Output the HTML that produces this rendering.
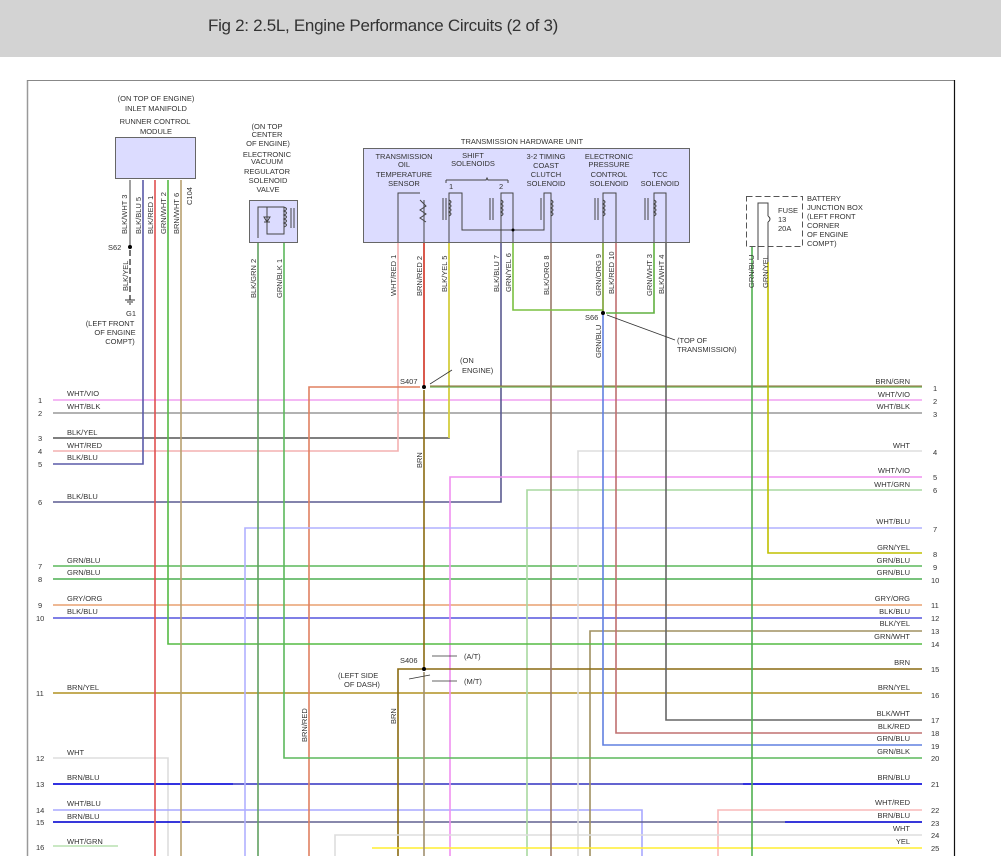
<!DOCTYPE html>
<html><head><meta charset="utf-8"><style>
html,body{margin:0;padding:0;background:#fff;width:1001px;height:856px;overflow:hidden}
.hd{position:absolute;left:0;top:0;width:1001px;height:57px;background:#d3d3d3}
.hd span{position:absolute;left:208px;top:16px;font:17px "Liberation Sans",sans-serif;color:#333;letter-spacing:-0.3px}
svg{position:absolute;left:0;top:0}
text{font-family:"Liberation Sans",sans-serif;font-size:7.5px;fill:#333}
</style></head><body>
<div class="hd"><span>Fig 2: 2.5L, Engine Performance Circuits (2 of 3)</span></div>
<svg width="1001" height="856" viewBox="0 0 1001 856">
<!-- frame -->
<line x1="27.5" y1="80" x2="27.5" y2="856" stroke="#999" stroke-width="1.5"/>
<line x1="27" y1="80.5" x2="955" y2="80.5" stroke="#888" stroke-width="1"/>
<line x1="954.5" y1="80" x2="954.5" y2="856" stroke="#111" stroke-width="1.2"/>

<g fill="none" stroke-width="1.6">
<!-- Left horizontals -->
<path d="M53 400H922" stroke="#f0a0f0"/>
<path d="M53 413H922" stroke="#999"/>
<path d="M53 438H449V242" stroke="#555"/>
<path d="M449 438V242" stroke="#e8e040"/>
<path d="M53 451H398V242" stroke="#f4b0b0"/>
<path d="M53 464H143V180" stroke="#5a5aa8"/>
<path d="M53 502H501V242" stroke="#5a5a90"/>
<path d="M53 566H922" stroke="#5cb85c"/>
<path d="M53 579H922" stroke="#4caf50"/>
<path d="M53 605H922" stroke="#e8a070"/>
<path d="M53 618H922" stroke="#5555dd"/>
<path d="M53 693H922" stroke="#b09020"/>
<path d="M53 758H168V856" stroke="#ddd"/>
<path d="M53 784H922" stroke="#3030c0"/>
<path d="M53 784H233" stroke="#1010e0"/>
<path d="M53 810H642V856" stroke="#a8a8ff"/>
<path d="M53 822H922" stroke="#606090"/>
<path d="M53 822H190" stroke="#1010e0"/>
<path d="M53 846H118" stroke="#b8e0b0"/>
<!-- Right-only horizontals -->
<path d="M430 387H922" stroke="#80c070"/>
<path d="M430 386H922" stroke="#8a6a30" stroke-width="1"/>
<path d="M309 856V387H420" stroke="#e08060"/>
<path d="M578 856V451H922" stroke="#ddd"/>
<path d="M450 856V477H922" stroke="#f090f0"/>
<path d="M527 856V490H922" stroke="#a8d8a0"/>
<path d="M245 856V528H922" stroke="#b0b0ff"/>
<path d="M768 262V553H922" stroke="#c0c000"/>
<path d="M590 856V631H922" stroke="#a09060"/>
<path d="M168 180V644H922" stroke="#55bb44"/>
<path d="M398 856V669H922" stroke="#8a6a10"/>
<path d="M666 242V720H922" stroke="#666"/>
<path d="M616 242V733H922" stroke="#c07070"/>
<path d="M603 313V745H922" stroke="#6080e0"/>
<path d="M284 242V758H922" stroke="#5cb85c"/>
<path d="M743 784H922" stroke="#1010e0"/>
<path d="M718 856V810H922" stroke="#f8b8b8"/>
<path d="M785 822H922" stroke="#1010e0"/>
<path d="M335 856V835H922" stroke="#ddd"/>
<path d="M372 848H922" stroke="#ffee30"/>
<!-- verticals -->
<path d="M130 180V247" stroke="#888"/>
<path d="M130 250V300" stroke="#555" stroke-dasharray="6,3"/>
<path d="M155 180V856" stroke="#e05050"/>
<path d="M181 180V856" stroke="#b8a070"/>
<path d="M258 242V856" stroke="#60a060"/>
<path d="M424 242V387" stroke="#d03020"/>
<path d="M424 390V669" stroke="#8a6a10"/>
<path d="M424 672V856" stroke="#a09070"/>
<path d="M551 242V856" stroke="#9a7a6a"/>
<path d="M513 242V310H603" stroke="#7ac040"/>
<path d="M654 242V313H606" stroke="#60b040"/>
<path d="M603 242V313" stroke="#7aa030"/>
<path d="M752 246V856" stroke="#50b050"/>
</g>
<!-- modules -->
<rect x="115.5" y="137.5" width="80" height="41" fill="#dcdcff" stroke="#666"/>
<rect x="249.5" y="200.5" width="48" height="42" fill="#dcdcff" stroke="#666"/>
<rect x="363.5" y="148.5" width="326" height="94" fill="#dcdcff" stroke="#666"/>
<rect x="746.5" y="196.5" width="56" height="50" fill="#fff" stroke="#555" stroke-dasharray="6,3"/>
<!-- inner trans unit -->
<g fill="none" stroke="#444" stroke-width="1">
<path d="M398 242V193H420 M424 200V242 M420 200l6 6-6 4 6 4-6 4 6 4"/>
<path d="M449 242V193H462V230H544V193H551V242 M501 242V193H513V242 M603 242V193H616V242 M654 242V193H666V242"/>
<path d="M443 198v22 M446 198v22 M490 198v22 M493 198v22 M541 198v22 M544 198v22 M595 198v22 M598 198v22 M645 198v22 M648 198v22"/>
<path d="M449 200q4 2 0 4q4 2 0 4q4 2 0 4q4 2 0 4 M501 200q4 2 0 4q4 2 0 4q4 2 0 4q4 2 0 4 M551 200q4 2 0 4q4 2 0 4q4 2 0 4q4 2 0 4 M603 200q4 2 0 4q4 2 0 4q4 2 0 4q4 2 0 4 M654 200q4 2 0 4q4 2 0 4q4 2 0 4q4 2 0 4"/>
<path d="M446 180h40l1 -2 1 2h20 M446 180v3 M508 180v3"/>
<path d="M258 238V207H284V234H267V207 M284 207q5 2 0 4q5 2 0 4q5 2 0 4q5 2 0 4q5 2 0 4 M291 208v20 M294 208v20 M264 217h6l-3 5z M264 222h6"/>
<path d="M758 260V203H768V216 M768 216q4 3 0 6 M768 222V262"/>
</g>
<circle cx="424" cy="387" r="2" fill="#000"/><circle cx="424" cy="669" r="2" fill="#000"/>
<circle cx="603" cy="313" r="2" fill="#000"/><circle cx="130" cy="247" r="2" fill="#000"/>
<circle cx="513" cy="230" r="1.5" fill="#000"/>
<path d="M125 300h10 M127 302h6 M129 304h2" stroke="#333"/>
<g stroke="#333" stroke-width="0.8" fill="none">
<path d="M430 384L452 370 M430 675L409 679 M432 656H457 M432 681H457 M607 315L675 340"/>
</g>
<!-- texts -->
<g text-anchor="middle">
<text x="156" y="101">(ON TOP OF ENGINE)</text><text x="156" y="111">INLET MANIFOLD</text>
<text x="155" y="124">RUNNER CONTROL</text><text x="156" y="134">MODULE</text>
<text x="267" y="129">(ON TOP</text><text x="267" y="137">CENTER</text><text x="268" y="146">OF ENGINE)</text>
<text x="267" y="157">ELECTRONIC</text><text x="267" y="164">VACUUM</text><text x="267" y="174">REGULATOR</text><text x="268" y="183">SOLENOID</text><text x="268" y="192">VALVE</text>
<text x="522" y="144">TRANSMISSION HARDWARE UNIT</text>
<text x="404" y="159">TRANSMISSION</text><text x="404" y="167">OIL</text><text x="404" y="177">TEMPERATURE</text><text x="404" y="186">SENSOR</text>
<text x="473" y="158">SHIFT</text><text x="473" y="166">SOLENOIDS</text>
<text x="546" y="159">3-2 TIMING</text><text x="546" y="168">COAST</text><text x="546" y="177">CLUTCH</text><text x="546" y="186">SOLENOID</text>
<text x="609" y="159">ELECTRONIC</text><text x="609" y="167">PRESSURE</text><text x="609" y="177">CONTROL</text><text x="609" y="186">SOLENOID</text>
<text x="660" y="177">TCC</text><text x="660" y="186">SOLENOID</text>
<text x="131" y="316">G1</text><text x="110" y="326">(LEFT FRONT</text><text x="115" y="335">OF ENGINE</text><text x="120" y="344">COMPT)</text>
</g>
<text x="449" y="189">1</text><text x="499" y="189">2</text>
<text x="778" y="213">FUSE</text><text x="778" y="222">13</text><text x="778" y="231">20A</text>
<text x="807" y="201">BATTERY</text><text x="807" y="210">JUNCTION BOX</text><text x="807" y="219">(LEFT FRONT</text><text x="807" y="228">CORNER</text><text x="807" y="237">OF ENGINE</text><text x="807" y="246">COMPT)</text>
<text x="108" y="250">S62</text><text x="400" y="384">S407</text><text x="400" y="663">S406</text><text x="585" y="320">S66</text>
<text x="460" y="363">(ON</text><text x="462" y="373">ENGINE)</text>
<text x="677" y="343">(TOP OF</text><text x="677" y="352">TRANSMISSION)</text>
<text x="464" y="659">(A/T)</text><text x="464" y="684">(M/T)</text>
<text x="338" y="678">(LEFT SIDE</text><text x="344" y="687">OF DASH)</text>
<!-- vertical wire labels -->
<g>
<text transform="translate(127,234) rotate(-90)">BLK/WHT  3</text>
<text transform="translate(141,234) rotate(-90)">BLK/BLU  5</text>
<text transform="translate(153,234) rotate(-90)">BLK/RED  1</text>
<text transform="translate(166,234) rotate(-90)">GRN/WHT  2</text>
<text transform="translate(179,234) rotate(-90)">BRN/WHT  6</text>
<text transform="translate(192,205) rotate(-90)">C104</text>
<text transform="translate(128,291) rotate(-90)">BLK/YEL</text>
<text transform="translate(256,298) rotate(-90)">BLK/GRN   2</text>
<text transform="translate(282,298) rotate(-90)">GRN/BLK   1</text>
<text transform="translate(396,296) rotate(-90)">WHT/RED    1</text>
<text transform="translate(422,296) rotate(-90)">BRN/RED    2</text>
<text transform="translate(447,292) rotate(-90)">BLK/YEL    5</text>
<text transform="translate(499,292) rotate(-90)">BLK/BLU    7</text>
<text transform="translate(511,292) rotate(-90)">GRN/YEL    6</text>
<text transform="translate(549,295) rotate(-90)">BLK/ORG    8</text>
<text transform="translate(601,296) rotate(-90)">GRN/ORG    9</text>
<text transform="translate(614,294) rotate(-90)">BLK/RED  10</text>
<text transform="translate(652,296) rotate(-90)">GRN/WHT    3</text>
<text transform="translate(664,294) rotate(-90)">BLK/WHT    4</text>
<text transform="translate(754,288) rotate(-90)">GRN/BLU</text>
<text transform="translate(768,288) rotate(-90)">GRN/YEL</text>
<text transform="translate(601,358) rotate(-90)">GRN/BLU</text>
<text transform="translate(422,468) rotate(-90)">BRN</text>
<text transform="translate(396,724) rotate(-90)">BRN</text>
<text transform="translate(307,742) rotate(-90)">BRN/RED</text>
</g>
<!-- left row labels -->
<g>
<text x="38" y="403">1</text><text x="38" y="416">2</text><text x="38" y="441">3</text><text x="38" y="454">4</text><text x="38" y="467">5</text><text x="38" y="505">6</text><text x="38" y="569">7</text><text x="38" y="582">8</text><text x="38" y="608">9</text><text x="36" y="621">10</text><text x="36" y="696">11</text><text x="36" y="761">12</text><text x="36" y="787">13</text><text x="36" y="813">14</text><text x="36" y="825">15</text><text x="36" y="850">16</text>
<text x="67" y="396">WHT/VIO</text><text x="67" y="409">WHT/BLK</text><text x="67" y="435">BLK/YEL</text><text x="67" y="448">WHT/RED</text><text x="67" y="460">BLK/BLU</text><text x="67" y="499">BLK/BLU</text><text x="67" y="563">GRN/BLU</text><text x="67" y="575">GRN/BLU</text><text x="67" y="601">GRY/ORG</text><text x="67" y="614">BLK/BLU</text><text x="67" y="690">BRN/YEL</text><text x="67" y="755">WHT</text><text x="67" y="780">BRN/BLU</text><text x="67" y="806">WHT/BLU</text><text x="67" y="819">BRN/BLU</text><text x="67" y="844">WHT/GRN</text>
</g>
<g text-anchor="end">
<text x="910" y="384">BRN/GRN</text><text x="910" y="397">WHT/VIO</text><text x="910" y="409">WHT/BLK</text><text x="910" y="448">WHT</text><text x="910" y="473">WHT/VIO</text><text x="910" y="487">WHT/GRN</text><text x="910" y="524">WHT/BLU</text><text x="910" y="550">GRN/YEL</text><text x="910" y="563">GRN/BLU</text><text x="910" y="575">GRN/BLU</text><text x="910" y="601">GRY/ORG</text><text x="910" y="614">BLK/BLU</text><text x="910" y="626">BLK/YEL</text><text x="910" y="639">GRN/WHT</text><text x="910" y="665">BRN</text><text x="910" y="690">BRN/YEL</text><text x="910" y="716">BLK/WHT</text><text x="910" y="729">BLK/RED</text><text x="910" y="741">GRN/BLU</text><text x="910" y="754">GRN/BLK</text><text x="910" y="780">BRN/BLU</text><text x="910" y="805">WHT/RED</text><text x="910" y="818">BRN/BLU</text><text x="910" y="831">WHT</text><text x="910" y="844">YEL</text>
</g>
<g>
<text x="933" y="391">1</text><text x="933" y="404">2</text><text x="933" y="417">3</text><text x="933" y="455">4</text><text x="933" y="480">5</text><text x="933" y="493">6</text><text x="933" y="532">7</text><text x="933" y="557">8</text><text x="933" y="570">9</text><text x="931" y="583">10</text><text x="931" y="608">11</text><text x="931" y="621">12</text><text x="931" y="634">13</text><text x="931" y="647">14</text><text x="931" y="672">15</text><text x="931" y="698">16</text><text x="931" y="723">17</text><text x="931" y="736">18</text><text x="931" y="749">19</text><text x="931" y="761">20</text><text x="931" y="787">21</text><text x="931" y="813">22</text><text x="931" y="826">23</text><text x="931" y="838">24</text><text x="931" y="851">25</text>
</g>
</svg>
</body></html>
